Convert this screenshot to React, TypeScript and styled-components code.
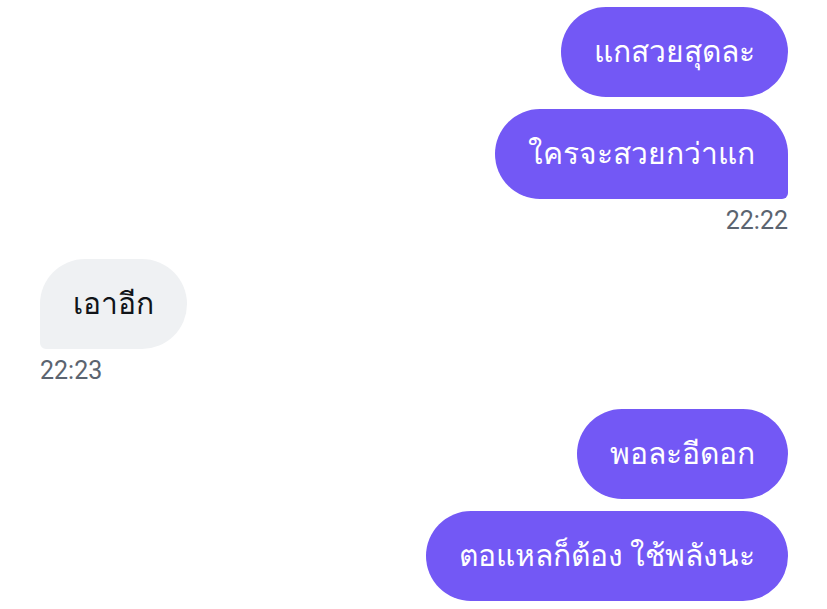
import React from "react";
import styled, { createGlobalStyle } from "styled-components";

const Global = createGlobalStyle`
  html, body { margin: 0; padding: 0; background: #ffffff; }
  body { font-family: Roboto, sans-serif; }
`;

const Page = styled.div`
  display: flex;
  flex-direction: column;
  gap: 24px;
  padding: 7px 39px 0 40px;
`;

const Group = styled.div<{ $mine: boolean }>`
  display: flex;
  flex-direction: column;
  align-items: ${(p) => (p.$mine ? "flex-end" : "flex-start")};
  gap: 12px;
`;

const Bubble = styled.div<{ $mine: boolean; $tail: boolean }>`
  box-sizing: border-box;
  height: 90px;
  display: flex;
  align-items: center;
  padding: 0 33px;
  font-family: Roboto, sans-serif;
  font-size: 30px;
  line-height: 1;
  white-space: nowrap;
  color: ${(p) => (p.$mine ? "#ffffff" : "#111418")};
  background: ${(p) => (p.$mine ? "#7358f5" : "#eff1f3")};
  border-radius: ${(p) =>
    !p.$tail ? "45px" : p.$mine ? "45px 45px 6px 45px" : "45px 45px 45px 6px"};
`;

const Time = styled.div`
  margin-top: -4px;
  font-family: Roboto, sans-serif;
  font-size: 25px;
  line-height: 28px;
  color: #5b6470;
`;

type Msg = { text: string };
type G = { mine: boolean; msgs: Msg[]; time?: string };

const groups: G[] = [
  { mine: true, msgs: [{ text: "แกสวยสุดละ" }, { text: "ใครจะสวยกว่าแก" }], time: "22:22" },
  { mine: false, msgs: [{ text: "เอาอีก" }], time: "22:23" },
  { mine: true, msgs: [{ text: "พอละอีดอก" }, { text: "ตอแหลก็ต้อง ใช้พลังนะ" }] },
];

export default function App() {
  return (
    <>
      <Global />
      <Page>
        {groups.map((g, i) => (
          <Group key={i} $mine={g.mine}>
            {g.msgs.map((m, j) => (
              <Bubble
                key={j}
                $mine={g.mine}
                $tail={!!g.time && j === g.msgs.length - 1}
              >
                {m.text}
              </Bubble>
            ))}
            {g.time && <Time>{g.time}</Time>}
          </Group>
        ))}
      </Page>
    </>
  );
}
